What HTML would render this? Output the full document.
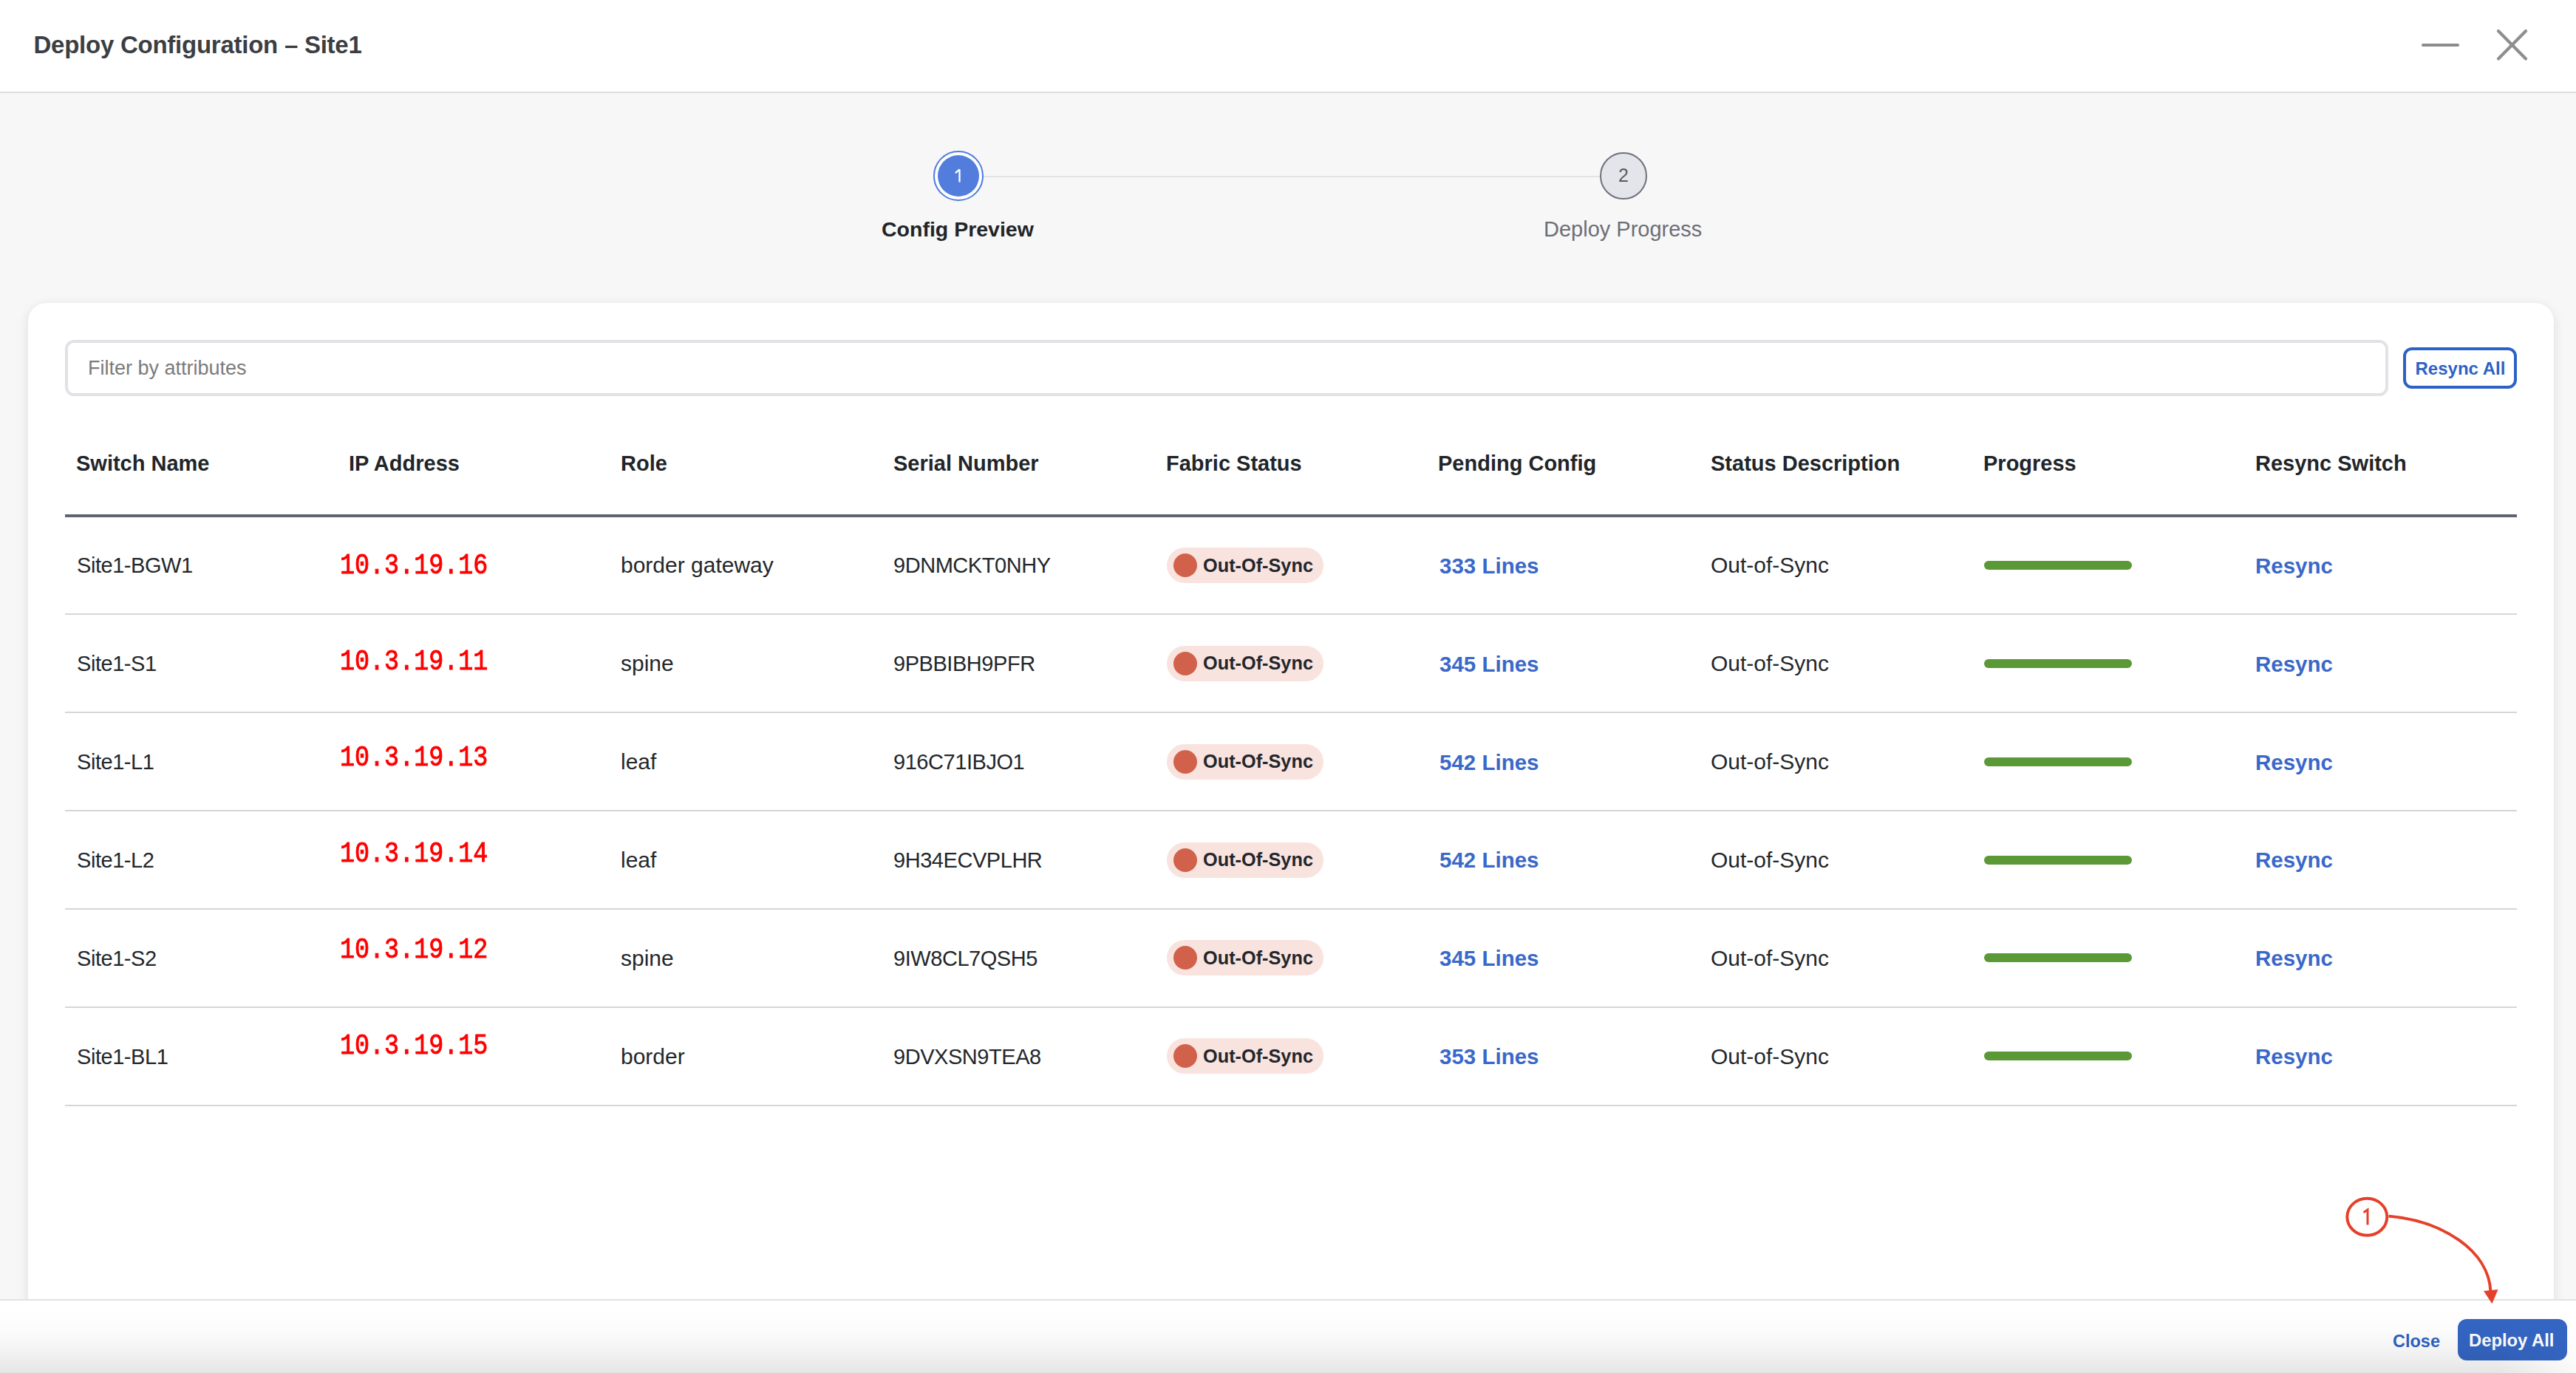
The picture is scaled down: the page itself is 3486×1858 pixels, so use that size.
<!DOCTYPE html>
<html><head><meta charset="utf-8"><title>Deploy Configuration - Site1</title>
<style>
html,body{margin:0;padding:0}
body{width:3486px;height:1858px;position:relative;overflow:hidden;background:#f7f7f7;font-family:"Liberation Sans",sans-serif;color:#212529}
.a{position:absolute;white-space:nowrap}
.hdr{position:absolute;left:0;top:0;width:3486px;height:124px;background:#fff;border-bottom:2px solid #dedede}
.title{left:45.5px;top:44px;font-size:33px;line-height:33px;font-weight:700;color:#3b3e43;letter-spacing:-0.25px}
.step-line{position:absolute;left:1330px;top:238px;width:836px;height:2px;background:#e3e4e8}
.c1{position:absolute;left:1263px;top:204px;width:64px;height:64px;border:2px solid #4f7cdc;border-radius:50%;background:#fff}
.c1 i{position:absolute;left:4px;top:4px;width:56px;height:56px;border-radius:50%;background:#527ddc}
.c2{position:absolute;left:2165px;top:206px;width:60px;height:60px;border:2px solid #707179;border-radius:50%;background:#e4e5ea}
.num{position:absolute;width:100%;text-align:center;font-size:25px;line-height:25px}
.card{position:absolute;left:38px;top:410px;width:3418px;height:1400px;background:#fff;border-radius:25px;box-shadow:0 4px 16px rgba(0,0,0,.11)}
.filter{position:absolute;left:88px;top:460px;width:3136px;height:68px;border:4px solid #e1e2e6;border-radius:12px;background:#fff;box-sizing:content-box}
.ph{left:119px;top:485px;font-size:27px;line-height:27px;color:#7b7b7b}
.rsa{position:absolute;left:3252px;top:470px;width:146px;height:48px;border:4px solid #2d62c5;border-radius:12px;background:#fff}
.rsa-t{left:3268.5px;top:486.5px;font-size:24px;line-height:24px;font-weight:700;color:#2d62c5}
.th{top:613px;font-size:29px;line-height:29px;font-weight:700;color:#212529}
.hline{position:absolute;left:88px;top:696px;width:3318px;height:4px;background:#5d6670}
.sep{position:absolute;left:88px;width:3318px;height:2px;background:#d6d6d6}
.td{font-size:30px;line-height:30px;color:#23272b}
.tn{font-size:29px;line-height:30px;letter-spacing:-0.45px;color:#23272b}
.ip{font-family:"Liberation Mono",monospace;font-weight:400;-webkit-text-stroke:0.8px #ff0000;font-size:33.4px;line-height:34px;color:#ff0000;transform:scaleY(1.15);transform-origin:0 26px}
.badge{position:absolute;left:1579px;width:212px;height:48px;border-radius:24px;background:#f8e3df}
.badge i{position:absolute;left:9px;top:8px;width:32px;height:32px;border-radius:50%;background:#d1614a}
.badge b{position:absolute;left:49px;top:11.8px;font-size:25.3px;line-height:25.3px;font-weight:700;color:#22262b;white-space:nowrap}
.lnk{font-size:29.5px;line-height:29.5px;font-weight:700;color:#3a68c9}
.bar{position:absolute;left:2685px;width:200px;height:12px;border-radius:6px;background:#5b9836}
.footer{position:absolute;left:0;top:1758px;width:3486px;height:100px;border-top:2px solid #e1e2e8;background:#fff}
.vign{position:absolute;left:0;top:1772px;width:3486px;height:86px;background:linear-gradient(rgba(0,0,0,0) 0,rgba(0,0,0,.012) 30%,rgba(0,0,0,.035) 55%,rgba(0,0,0,.07) 80%,rgba(0,0,0,.1) 100%);-webkit-mask-image:linear-gradient(to right,#000 0,#000 3380px,rgba(0,0,0,.2) 3486px);mask-image:linear-gradient(to right,#000 0,#000 3380px,rgba(0,0,0,.2) 3486px)}
.close-t{left:3238px;top:1804px;font-size:23.5px;line-height:23.5px;font-weight:700;color:#2d62c5}
.deploy{position:absolute;left:3326px;top:1785px;width:148px;height:56px;border-radius:12px;background:#3566c4}
.deploy-t{left:3341px;top:1801.8px;font-size:23.8px;line-height:23.8px;font-weight:700;color:#fff}
</style></head><body>
<div class="hdr"></div>
<div class="a title">Deploy Configuration – Site1</div>
<svg class="a" style="left:0;top:0" width="3486" height="126">
  <line x1="3279" y1="61" x2="3326" y2="61" stroke="#8c8c8c" stroke-width="4.2" stroke-linecap="round"/>
  <line x1="3381" y1="42" x2="3418" y2="79.5" stroke="#8e8e8e" stroke-width="4.2" stroke-linecap="round"/>
  <line x1="3418" y1="42" x2="3381" y2="79.5" stroke="#8e8e8e" stroke-width="4.2" stroke-linecap="round"/>
</svg>

<div class="step-line"></div>
<div class="c1"><i></i></div>
<svg class="a" style="left:1280px;top:220px" width="36" height="36"><path d="M12.8 14.2 L18.5 9.4 L18.5 26.4" fill="none" stroke="#fff" stroke-width="2.3" stroke-linejoin="bevel"/></svg>
<div class="c2"><div class="num" style="top:16.8px;color:#5a5b63">2</div></div>
<div class="a" style="left:1193px;top:296px;font-size:28.5px;line-height:28.5px;font-weight:700;color:#212529">Config Preview</div>
<div class="a" style="left:2089px;top:295.5px;font-size:29px;line-height:29px;color:#6d6e76">Deploy Progress</div>

<div class="card"></div>
<div class="filter"></div>
<div class="a ph">Filter by attributes</div>
<div class="rsa"></div>
<div class="a rsa-t">Resync All</div>

<div class="a th" style="left:103px">Switch Name</div>
<div class="a th" style="left:472px">IP Address</div>
<div class="a th" style="left:840px">Role</div>
<div class="a th" style="left:1209px">Serial Number</div>
<div class="a th" style="left:1578px">Fabric Status</div>
<div class="a th" style="left:1946px">Pending Config</div>
<div class="a th" style="left:2315px">Status Description</div>
<div class="a th" style="left:2684px">Progress</div>
<div class="a th" style="left:3052px">Resync Switch</div>
<div class="hline"></div>

<!-- ROWS -->
<div class="a tn" style="left:104px;top:750.3px">Site1-BGW1</div>
<div class="a ip" style="left:460px;top:749.7px">10.3.19.16</div>
<div class="a td" style="left:840px;top:750.3px">border gateway</div>
<div class="a tn" style="left:1209px;top:750.3px">9DNMCKT0NHY</div>
<div class="badge" style="top:740.8px"><i></i><b>Out-Of-Sync</b></div>
<div class="a lnk" style="left:1948px;top:750.7px">333 Lines</div>
<div class="a td" style="left:2315px;top:750.3px">Out-of-Sync</div>
<div class="bar" style="top:758.8px"></div>
<div class="a lnk" style="left:3052px;top:750.7px">Resync</div>
<div class="sep" style="top:830.2px"></div>
<div class="a tn" style="left:104px;top:883.2px">Site1-S1</div>
<div class="a ip" style="left:460px;top:879.7px">10.3.19.11</div>
<div class="a td" style="left:840px;top:883.2px">spine</div>
<div class="a tn" style="left:1209px;top:883.2px">9PBBIBH9PFR</div>
<div class="badge" style="top:873.7px"><i></i><b>Out-Of-Sync</b></div>
<div class="a lnk" style="left:1948px;top:883.6px">345 Lines</div>
<div class="a td" style="left:2315px;top:883.2px">Out-of-Sync</div>
<div class="bar" style="top:891.7px"></div>
<div class="a lnk" style="left:3052px;top:883.6px">Resync</div>
<div class="sep" style="top:963.1px"></div>
<div class="a tn" style="left:104px;top:1016.1px">Site1-L1</div>
<div class="a ip" style="left:460px;top:1009.7px">10.3.19.13</div>
<div class="a td" style="left:840px;top:1016.1px">leaf</div>
<div class="a tn" style="left:1209px;top:1016.1px">916C71IBJO1</div>
<div class="badge" style="top:1006.6px"><i></i><b>Out-Of-Sync</b></div>
<div class="a lnk" style="left:1948px;top:1016.5px">542 Lines</div>
<div class="a td" style="left:2315px;top:1016.1px">Out-of-Sync</div>
<div class="bar" style="top:1024.6px"></div>
<div class="a lnk" style="left:3052px;top:1016.5px">Resync</div>
<div class="sep" style="top:1096.0px"></div>
<div class="a tn" style="left:104px;top:1149.0px">Site1-L2</div>
<div class="a ip" style="left:460px;top:1139.7px">10.3.19.14</div>
<div class="a td" style="left:840px;top:1149.0px">leaf</div>
<div class="a tn" style="left:1209px;top:1149.0px">9H34ECVPLHR</div>
<div class="badge" style="top:1139.5px"><i></i><b>Out-Of-Sync</b></div>
<div class="a lnk" style="left:1948px;top:1149.4px">542 Lines</div>
<div class="a td" style="left:2315px;top:1149.0px">Out-of-Sync</div>
<div class="bar" style="top:1157.5px"></div>
<div class="a lnk" style="left:3052px;top:1149.4px">Resync</div>
<div class="sep" style="top:1228.9px"></div>
<div class="a tn" style="left:104px;top:1281.9px">Site1-S2</div>
<div class="a ip" style="left:460px;top:1269.7px">10.3.19.12</div>
<div class="a td" style="left:840px;top:1281.9px">spine</div>
<div class="a tn" style="left:1209px;top:1281.9px">9IW8CL7QSH5</div>
<div class="badge" style="top:1272.4px"><i></i><b>Out-Of-Sync</b></div>
<div class="a lnk" style="left:1948px;top:1282.3px">345 Lines</div>
<div class="a td" style="left:2315px;top:1281.9px">Out-of-Sync</div>
<div class="bar" style="top:1290.4px"></div>
<div class="a lnk" style="left:3052px;top:1282.3px">Resync</div>
<div class="sep" style="top:1361.8px"></div>
<div class="a tn" style="left:104px;top:1414.8px">Site1-BL1</div>
<div class="a ip" style="left:460px;top:1399.7px">10.3.19.15</div>
<div class="a td" style="left:840px;top:1414.8px">border</div>
<div class="a tn" style="left:1209px;top:1414.8px">9DVXSN9TEA8</div>
<div class="badge" style="top:1405.3px"><i></i><b>Out-Of-Sync</b></div>
<div class="a lnk" style="left:1948px;top:1415.2px">353 Lines</div>
<div class="a td" style="left:2315px;top:1414.8px">Out-of-Sync</div>
<div class="bar" style="top:1423.3px"></div>
<div class="a lnk" style="left:3052px;top:1415.2px">Resync</div>
<div class="sep" style="top:1494.7px"></div>

<div class="footer"></div>
<div class="a close-t">Close</div>
<div class="deploy"></div>
<div class="a deploy-t">Deploy All</div>
<svg class="a" style="left:3100px;top:1580px" width="386" height="278" viewBox="0 0 386 278">
  <ellipse cx="103.3" cy="66.8" rx="27" ry="25" fill="none" stroke="#e5402a" stroke-width="4"/>
  <path d="M98.5 60.8 L104 57 L104 77.4" fill="none" stroke="#e5402a" stroke-width="3"/>
  <path d="M132.6 65.8 C 205 72, 268 112, 270.5 168" fill="none" stroke="#e5402a" stroke-width="4"/>
  <path d="M261 167 L280.5 165 L272.4 184.3 Z" fill="#e5402a"/>
</svg>
<div class="vign"></div>
</body></html>
